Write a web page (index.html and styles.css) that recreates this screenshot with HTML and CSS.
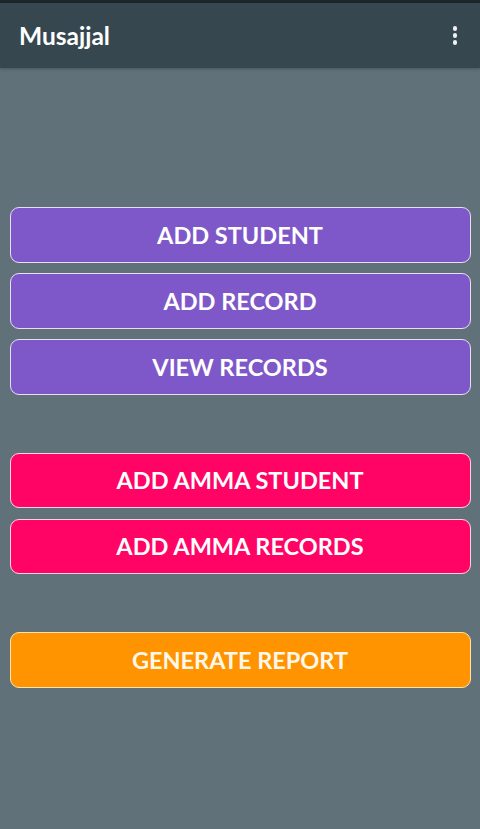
FILE: index.html
```html
<!DOCTYPE html>
<html lang="en">
<head>
    <meta charset="UTF-8">
    <meta name="viewport" content="width=device-width, initial-scale=1.0">
    <title>Musajjal</title>
    <link rel="stylesheet" href="styles.css">
</head>
<body>
    <div class="status-bar"></div>
    <div class="app-bar">
        <h1>Musajjal</h1>
        <div class="menu">
            <span></span><span></span><span></span>
        </div>
    </div>
    <div class="content">
        <div class="group">
            <button class="btn purple">ADD STUDENT</button>
            <button class="btn purple">ADD RECORD</button>
            <button class="btn purple">VIEW RECORDS</button>
        </div>
        <div class="group">
            <button class="btn pink">ADD AMMA STUDENT</button>
            <button class="btn pink">ADD AMMA RECORDS</button>
        </div>
        <div class="group">
            <button class="btn orange">GENERATE REPORT</button>
        </div>
    </div>
</body>
</html>
```

FILE: styles.css
```css
body {
    font-family: Lato, "Open Sans", sans-serif;
    margin: 0;
    background-color: #607179;
    height: 100vh;
}
.status-bar {
    height: 3px;
    background-color: #1c272c;
}
.app-bar {
    height: 65px;
    background-color: #37474f;
    display: flex;
    align-items: center;
    justify-content: space-between;
    padding: 0 20px 0 19px;
    box-shadow: 0 1px 3px rgba(0, 0, 0, 0.25);
}
h1 {
    color: #fff;
    font-size: 24.5px;
    font-weight: bold;
    margin: 0 0 1px;
}
.menu {
    display: flex;
    flex-direction: column;
    gap: 2.5px;
    padding-right: 3px;
}
.menu span {
    width: 4.5px;
    height: 4.5px;
    border-radius: 50%;
    background-color: #f1f1f1;
}
.content {
    padding: 139px 9.5px 0;
    display: flex;
    flex-direction: column;
    gap: 58px;
}
.group {
    display: flex;
    flex-direction: column;
    gap: 10.5px;
}
.btn {
    height: 55.5px;
    border-radius: 9px;
    border: 1.5px solid;
    font-family: Lato, sans-serif;
    font-size: 23.5px;
    font-weight: bold;
    color: #fff;
    cursor: pointer;
    padding: 0;
}
.purple {
    background-color: #7e58c8;
    border-color: #e8def6;
}
.pink {
    background-color: #ff0464;
    border-color: #ffd4e2;
}
.orange {
    background-color: #ff9300;
    border-color: #ffe3a8;
    color: #fff8ea;
}
```
